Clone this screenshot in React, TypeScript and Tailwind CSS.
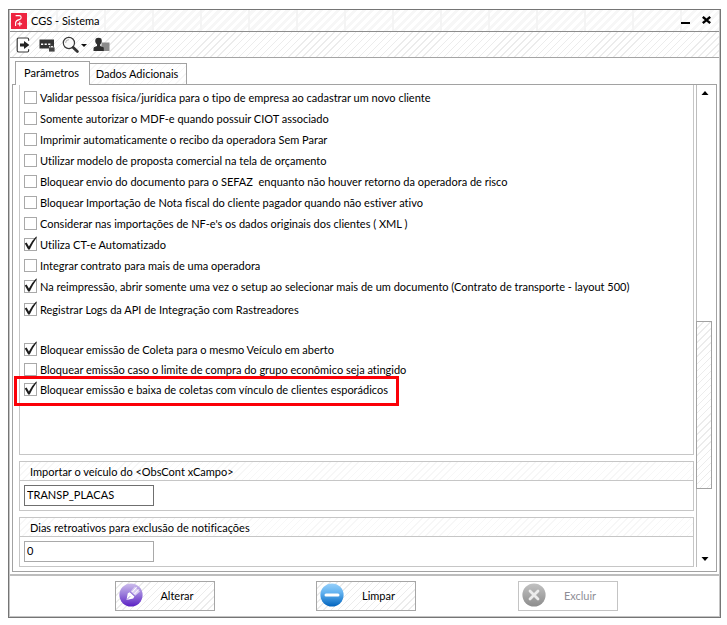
import { useState, type ReactNode } from 'react'
import clsx from 'clsx'

const HATCH = 'bg-[repeating-linear-gradient(135deg,#ffffff_0_4px,#ececec_4px_5px)]'
const HATCH_LIGHT = 'bg-[repeating-linear-gradient(135deg,#ffffff_0_4px,#f7f7f7_4px_5px)]'
const HATCH_TITLE =
  'bg-[repeating-linear-gradient(90deg,transparent_0_46px,#f4f4f4_46px_48px),repeating-linear-gradient(135deg,#ffffff_0_3px,#f7f7f7_3px_6px)]'

type Option = { label: string; checked?: boolean; highlighted?: boolean }

const generalOptions: Option[] = [
  { label: 'Validar pessoa física/jurídica para o tipo de empresa ao cadastrar um novo cliente' },
  { label: 'Somente autorizar o MDF-e quando possuir CIOT associado' },
  { label: 'Imprimir automaticamente o recibo da operadora Sem Parar' },
  { label: 'Utilizar modelo de proposta comercial na tela de orçamento' },
  { label: 'Bloquear envio do documento para o SEFAZ  enquanto não houver retorno da operadora de risco' },
  { label: 'Bloquear Importação de Nota fiscal do cliente pagador quando não estiver ativo' },
  { label: "Considerar nas importações de NF-e's os dados originais dos clientes ( XML )" },
  { label: 'Utiliza CT-e Automatizado', checked: true },
  { label: 'Integrar contrato para mais de uma operadora' },
  {
    label:
      'Na reimpressão, abrir somente uma vez o setup ao selecionar mais de um documento (Contrato de transporte - layout 500)',
    checked: true,
  },
]

const logOptions: Option[] = [
  { label: 'Registrar Logs da API de Integração com Rastreadores', checked: true },
]

const blockOptions: Option[] = [
  { label: 'Bloquear emissão de Coleta para o mesmo Veículo em aberto', checked: true },
  { label: 'Bloquear emissão caso o limite de compra do grupo econômico seja atingido' },
  {
    label: 'Bloquear emissão e baixa de coletas com vínculo de clientes esporádicos',
    checked: true,
    highlighted: true,
  },
]

function CheckOption({ label, checked = false, highlighted }: Option) {
  const [on, setOn] = useState(checked)
  return (
    <div className="relative">
      <label className="flex h-[13px] items-center gap-[3px] leading-[15px] whitespace-pre">
        <span className="relative block h-[13px] w-[13px] shrink-0">
          <input
            type="checkbox"
            checked={on}
            onChange={() => setOn(!on)}
            className="block h-[13px] w-[13px] appearance-none border border-[#a9a9a9] bg-white"
          />
          {on && (
            <svg viewBox="0 0 13 14" className="pointer-events-none absolute bottom-px left-0 h-[14px] w-[13px]">
              <path d="M0.8 7.4 2.6 6.6 4.9 10.6 Q8 4.5 12.2 0.6 L13 0.9 Q8.8 6.6 5.7 13.4 L4.2 13.6Z" fill="#1c1c1c" />
            </svg>
          )}
        </span>
        {label}
      </label>
      {highlighted && (
        <div className="pointer-events-none absolute -top-[7px] -left-[10px] h-[30px] w-[385px] border-[3px] border-[#fb0007]" />
      )}
    </div>
  )
}

function OptionList({ options, className }: { options: Option[]; className: string }) {
  return (
    <div className={clsx('flex flex-col', className)}>
      {options.map((option) => (
        <CheckOption key={option.label} {...option} />
      ))}
    </div>
  )
}

function Field({ id, title, value, strong }: { id: string; title: string; value: string; strong?: boolean }) {
  return (
    <section className="border border-[#c6c6c6] bg-white">
      <label
        htmlFor={id}
        className={clsx('block h-[19px] border-b border-[#c6c6c6] pl-2.5 leading-[20px]', HATCH_LIGHT)}
      >
        {title}
      </label>
      <div className="px-1 pt-1 pb-1">
        <input
          id={id}
          type="text"
          defaultValue={value}
          className={clsx(
            'block h-[21px] w-[130px] border bg-white px-0.5 pb-0.5 focus:outline-none',
            strong ? 'border-[#6f6f6f]' : 'border-[#a9a9a9]',
          )}
        />
      </div>
    </section>
  )
}

function ToolButton({ label, children }: { label: string; children: ReactNode }) {
  return (
    <button type="button" aria-label={label} className="flex h-5 shrink-0 items-center">
      {children}
    </button>
  )
}

function Toolbar() {
  return (
    <div className={clsx('flex h-[25px] items-center gap-2 pl-[5px]', HATCH)}>
      <ToolButton label="Sair">
        <svg viewBox="0 0 16 16" className="h-4 w-4">
          <path d="M13.6 3.8V2.2Q13.6 1 12.4 1H3.6Q2.2 1 2.2 2.4V13.6Q2.2 15 3.6 15H12.4Q13.6 15 13.6 13.8V12.2" fill="#fff" stroke="#3a3a3a" strokeWidth="1.2" />
          <path d="M5 6.4H9V4L14.4 8 9 12V9.6H5Z" fill="#222" />
        </svg>
      </ToolButton>
      <ToolButton label="Senha">
        <svg viewBox="0 0 16 16" className="h-4 w-4">
          <path d="M0.5 2.5H15V9H10V11.5H0.5Z" fill="#333" />
          <path d="M2 7.2h2.2M5.6 7.2h2.2M9.2 7.2h2.2" stroke="#fff" strokeWidth="1.4" />
          <path d="M11.2 10.5V9.4a1.6 1.6 0 0 1 3.2 0V10.5" fill="none" stroke="#444" strokeWidth="1.1" />
          <path d="M10 10.4H15.6V14.6H10Z" fill="#444" />
        </svg>
      </ToolButton>
      <ToolButton label="Pesquisar">
        <svg viewBox="0 0 25 18" className="-ml-px h-[18px] w-[25px]">
          <circle cx="6.9" cy="7" r="5.6" fill="#fafafa" stroke="#3a3a3a" strokeWidth="1.2" />
          <path d="M3.6 7A3.3 3.3 0 0 1 6.9 3.7" fill="none" stroke="#999" strokeWidth="0.8" />
          <path d="M11.2 11.4 15.4 15.6" stroke="#333" strokeWidth="2.8" strokeLinecap="round" />
          <path d="M19 8h6L22 11Z" fill="#111" />
        </svg>
      </ToolButton>
      <ToolButton label="Usuário">
        <svg viewBox="0 0 17 16" className="-ml-0.5 h-4 w-[17px]">
          <path d="M8.5 5.5H16.5V14H8.5Z" fill="#8b8b8b" />
          <path d="M5.5 0.8Q9 0.8 8.8 4.2Q8.6 6.5 7.2 7.6V9L10.8 10.4V14H0.5V11.5Q0.5 10 2 9.7L4 9V7.6Q2.4 6.5 2.2 4.2Q2 0.8 5.5 0.8Z" fill="#2e2e2e" />
        </svg>
      </ToolButton>
    </div>
  )
}

function TitleBar() {
  return (
    <header className={clsx('flex h-[21px] items-center pl-px', HATCH_TITLE)}>
      <svg viewBox="0 0 16 16" className="h-4 w-4 shrink-0">
        <path d="M0 0H16V16H0Z" fill="#ee2440" />
        <path d="M4.6 2.6H8.2Q10.2 2.6 10.2 4.4Q10.2 6.2 8.2 6.6Q5 7.2 4.6 9.6V13" fill="none" stroke="#fff" strokeWidth="1.1" />
        <path d="M8.8 8.6v4.6M6.5 10.9h4.6" stroke="#fff" strokeWidth="1.1" />
      </svg>
      <h1 className="ml-1">CGS - Sistema</h1>
      <div className="ml-auto flex items-center gap-2.5 pr-[7px]">
        <button type="button" aria-label="Minimizar">
          <svg viewBox="0 0 11 11" className="h-[11px] w-[11px]">
            <path d="M1 8H10" stroke="#000" strokeWidth="2" />
          </svg>
        </button>
        <button type="button" aria-label="Fechar">
          <svg viewBox="0 0 11 11" className="h-[11px] w-[11px]">
            <path d="M1.8 1.8 9.2 8.2M9.2 1.8 1.8 8.2" stroke="#000" strokeWidth="2.4" />
          </svg>
        </button>
      </div>
    </header>
  )
}

function ScrollBar() {
  return (
    <div className="flex w-4 shrink-0 flex-col border-l border-[#bdbdbd]">
      <button type="button" aria-label="Rolar para cima" className="flex h-4 items-center justify-center">
        <svg viewBox="0 0 8 4" className="h-1 w-2">
          <path d="M0.5 4 4 0 7.5 4Z" fill="#000" />
        </svg>
      </button>
      <div className="flex-[221]" />
      <div className={clsx('-ml-px flex-[167] border border-[#a2a2a2]', HATCH)} />
      <div className="flex-[62]" />
      <button type="button" aria-label="Rolar para baixo" className="flex h-4 items-center justify-center">
        <svg viewBox="0 0 8 4" className="h-1 w-2">
          <path d="M0.5 0 4 4 7.5 0Z" fill="#000" />
        </svg>
      </button>
    </div>
  )
}

function ActionButton({ label, disabled, children }: { label: string; disabled?: boolean; children: ReactNode }) {
  return (
    <button
      type="button"
      disabled={disabled}
      className={clsx(
        'flex h-[30px] w-[100px] items-center border pr-0.5 pb-0.5 pl-[3px]',
        disabled ? 'border-[#c4c4c4] bg-white text-[#8e8e96]' : clsx('border-[#a6a6a6] text-black', HATCH),
      )}
    >
      {children}
      <span className="flex-1 text-center">{label}</span>
    </button>
  )
}

export default function App() {
  const [tab, setTab] = useState('params')
  return (
    <div className="bg-white pt-[9px] pr-1.5 pb-1.5 pl-2 font-['Lato',sans-serif] text-[11px] leading-[13px] text-black [font-variant-ligatures:none]">
      <div className="border border-[#757575] bg-white shadow-[inset_0_0_0_1px_#c4c4c4]">
        <div className="px-px">
          <TitleBar />
          <div className="border-t border-b border-t-[#8d8d8d] border-b-[#a5a5a5]">
            <Toolbar />
          </div>
        </div>

        <div className="px-[3px] pt-[3px] pb-0.5">
          <div role="tablist" className="relative flex items-end pl-[3px]">
            <button
              type="button"
              role="tab"
              aria-selected={tab === 'params'}
              onClick={() => setTab('params')}
              className="-mb-px h-6 w-[75px] border border-b-0 border-[#a2a2a2] bg-white pr-0.5 pb-0.5"
            >
              Parâmetros
            </button>
            <button
              type="button"
              role="tab"
              aria-selected={tab === 'extra'}
              onClick={() => setTab('extra')}
              className={clsx('h-[21px] w-[97px] border border-b-0 border-l-0 border-[#a2a2a2] pr-0.5 pb-0.5', HATCH_LIGHT)}
            >
              Dados Adicionais
            </button>
          </div>

          <div className="flex border border-[#a2a2a2] pr-1 pb-1 pl-1.5">
            <div className="min-w-0 flex-1">
              <section className="border border-t-0 border-[#c6c6c6] pt-1.5 pb-[58px] pl-1">
                <OptionList options={generalOptions} className="gap-2" />
                <OptionList options={logOptions} className="mt-2.5" />
                <OptionList options={blockOptions} className="mt-[27px] gap-[7px]" />
              </section>
              <div className="mt-1.5 flex flex-col gap-1.5">
                <Field id="obs-cont" title="Importar o veículo do <ObsCont xCampo>" value="TRANSP_PLACAS" strong />
                <Field id="dias" title="Dias retroativos para exclusão de notificações" value="0" />
              </div>
            </div>
            <div className="ml-0.5 flex">
              <ScrollBar />
            </div>
          </div>
        </div>

        <footer className="mx-px flex items-start justify-evenly border-t-2 border-[#bdbdbd] pt-[5px] pb-1.5 pl-[3px]">
          <ActionButton label="Alterar">
            <svg viewBox="0 0 24 24" className="h-6 w-6">
              <defs>
                <linearGradient id="purple" x1="0" y1="0" x2="0" y2="1">
                  <stop offset="0" stopColor="#cdbdec" />
                  <stop offset="0.45" stopColor="#9b7ddb" />
                  <stop offset="1" stopColor="#5a1fc4" />
                </linearGradient>
              </defs>
              <circle cx="12" cy="12" r="11.6" fill="url(#purple)" />
              <path d="M7.5 17 8.8 10.2 10.8 9.2 15.4 13.6 14.2 15.4Z" fill="#fff" />
              <path d="M11.6 8.4 15.8 3.4 21 8.4 16.2 12.8Z" fill="#d9cdf1" />
              <path d="M13.4 9 17.6 4.2M15.4 11 19.8 6.4" stroke="#fff" strokeWidth="1" />
              <path d="M11 8.8 15.8 13.2M7.5 17 11.2 13.2" stroke="#9b82d8" strokeWidth="0.9" />
            </svg>
          </ActionButton>
          <ActionButton label="Limpar">
            <svg viewBox="0 0 24 24" className="h-6 w-6">
              <defs>
                <linearGradient id="blue" x1="0" y1="0" x2="0" y2="1">
                  <stop offset="0" stopColor="#97d0fa" />
                  <stop offset="0.4" stopColor="#62b2f0" />
                  <stop offset="1" stopColor="#0063bd" />
                </linearGradient>
              </defs>
              <circle cx="12" cy="12" r="11.6" fill="url(#blue)" />
              <path d="M6 12H18" stroke="#fff" strokeWidth="3" strokeLinecap="round" />
            </svg>
          </ActionButton>
          <ActionButton label="Excluir" disabled>
            <svg viewBox="0 0 24 24" className="h-6 w-6">
              <defs>
                <linearGradient id="gray" x1="0" y1="0" x2="0" y2="1">
                  <stop offset="0" stopColor="#c2c2c2" />
                  <stop offset="1" stopColor="#8c8c8c" />
                </linearGradient>
              </defs>
              <circle cx="12" cy="12" r="11.6" fill="url(#gray)" />
              <path d="M8 8 16 16M16 8 8 16" stroke="#ececec" strokeWidth="2.8" strokeLinecap="round" />
            </svg>
          </ActionButton>
        </footer>
      </div>
    </div>
  )
}
